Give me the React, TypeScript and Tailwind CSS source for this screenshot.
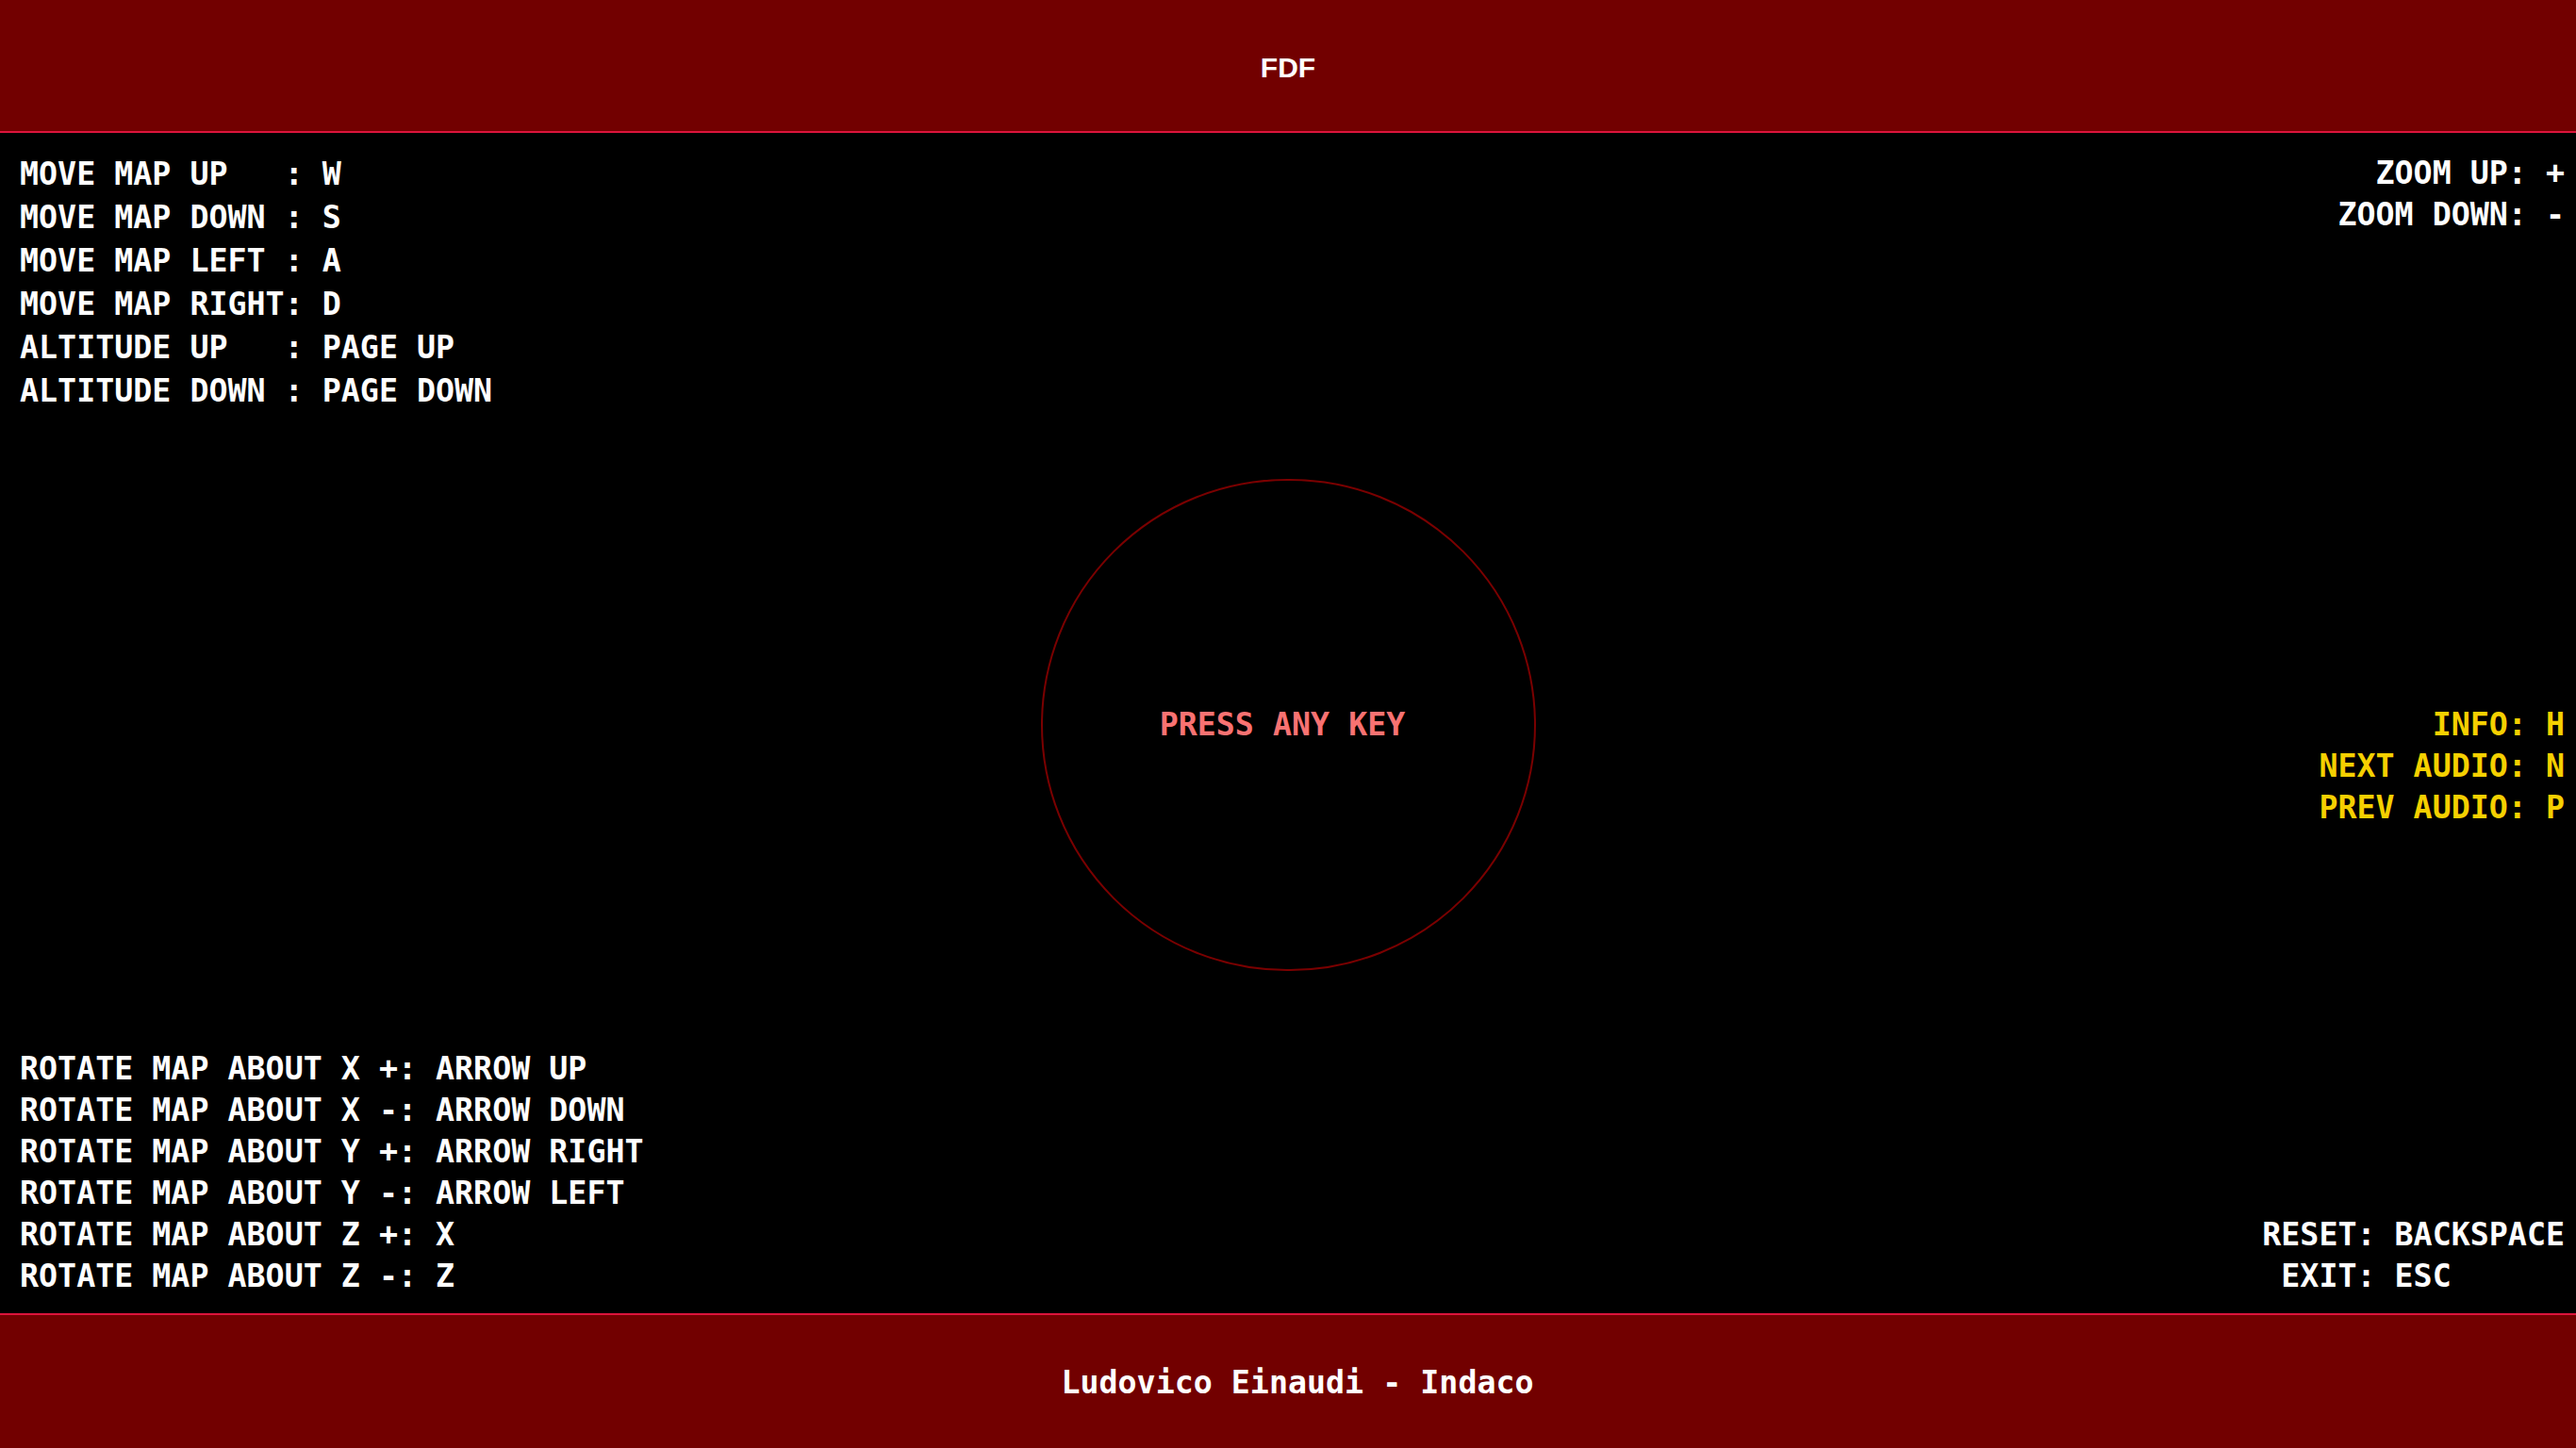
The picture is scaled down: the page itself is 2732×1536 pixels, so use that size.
const topLeft = [
  'MOVE MAP UP   : W',
  'MOVE MAP DOWN : S',
  'MOVE MAP LEFT : A',
  'MOVE MAP RIGHT: D',
  'ALTITUDE UP   : PAGE UP',
  'ALTITUDE DOWN : PAGE DOWN',
]

const topRight = ['ZOOM UP: +', 'ZOOM DOWN: -']

const audio = ['INFO: H', 'NEXT AUDIO: N', 'PREV AUDIO: P']

const bottomLeft = [
  'ROTATE MAP ABOUT X +: ARROW UP',
  'ROTATE MAP ABOUT X -: ARROW DOWN',
  'ROTATE MAP ABOUT Y +: ARROW RIGHT',
  'ROTATE MAP ABOUT Y -: ARROW LEFT',
  'ROTATE MAP ABOUT Z +: X',
  'ROTATE MAP ABOUT Z -: Z',
]

const bottomRight = ['RESET: BACKSPACE', ' EXIT: ESC']

function Lines({ items, className }: { items: string[]; className?: string }) {
  return (
    <div className={className}>
      {items.map((line) => (
        <div key={line} className="whitespace-pre">
          {line}
        </div>
      ))}
    </div>
  )
}

export default function App() {
  return (
    <div className="flex h-[1536px] w-full flex-col bg-black font-['DejaVu_Sans_Mono',monospace] text-[33.3px] font-bold text-white">
      <header className="flex h-[141px] shrink-0 items-center justify-center border-b-2 border-[#dc143c] bg-[#720000]">
        <h1 className="pt-[3px] font-['Liberation_Sans',Arial,sans-serif] text-[30px] font-bold">FDF</h1>
      </header>

      <main className="grid flex-1 grid-rows-[auto_1fr_auto] pb-[17px] pt-[21px]">
        <div className="flex items-start justify-between pl-[21px] pr-[12px]">
          <Lines items={topLeft} className="leading-[46px]" />
          <Lines items={topRight} className="text-right leading-[44px]" />
        </div>

        <div className="grid grid-cols-[1fr_auto_1fr] items-center px-[12px] pb-[12px]">
          <div />
          <div className="flex h-[522px] w-[525px] items-center justify-center rounded-full border-2 border-[#7a0000]">
            <span className="pr-[12px] text-[#f87272]">PRESS ANY KEY</span>
          </div>
          <Lines
            items={audio}
            className="justify-self-end pt-[88px] text-right leading-[44px] text-[#f5d000]"
          />
        </div>

        <div className="flex items-end justify-between pl-[21px] pr-[12px]">
          <Lines items={bottomLeft} className="leading-[44px]" />
          <Lines items={bottomRight} className="leading-[44px]" />
        </div>
      </main>

      <footer className="flex h-[143px] shrink-0 items-center justify-center border-t-2 border-[#dc143c] bg-[#720000]">
        <span className="pl-[20px] pt-[2px]">Ludovico Einaudi - Indaco</span>
      </footer>
    </div>
  )
}
